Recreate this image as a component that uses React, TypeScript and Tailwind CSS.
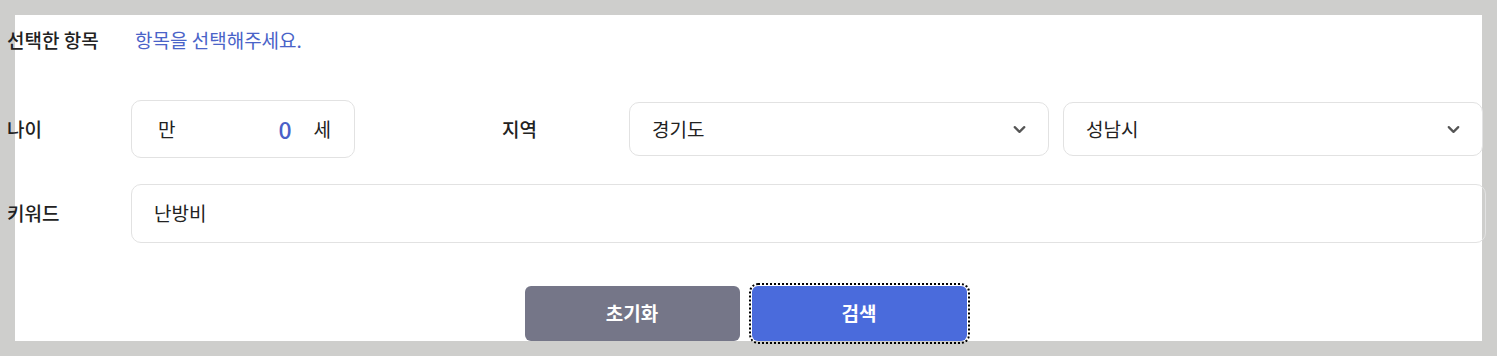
import { ChevronDown } from "lucide-react";

const font = { fontFamily: '"Noto Sans CJK KR", "Noto Sans", sans-serif' };

function Select({ value }: { value: string }) {
  return (
    <div className="flex h-[54px] w-[420px] shrink-0 items-center justify-between rounded-[10px] border border-[#e2e2e2] bg-white pl-[22px] pr-[19px]">
      <span className="text-[19px] text-[#222]">{value}</span>
      <ChevronDown size={19} strokeWidth={2.8} className="text-[#555]" />
    </div>
  );
}

export default function App() {
  return (
    <div className="min-h-screen bg-[#cececc] p-[15px] pr-0 pb-0" style={font}>
      <div className="h-[326px] w-[1467px] bg-white">
        <div className="ml-[-8px] flex w-[1480px] flex-col">
          {/* 선택한 항목 */}
          <div className="mt-[12px] flex h-[25px] items-center leading-[25px]">
            <span className="w-[128px] text-[19px] font-medium text-[#222]">선택한 항목</span>
            <span className="text-[19px] text-[#4a63c8]">항목을 선택해주세요.</span>
          </div>

          {/* 나이 / 지역 */}
          <div className="mt-[48px] flex h-[58px] items-center">
            <span className="w-[124px] shrink-0 text-[19px] font-medium text-[#222]">나이</span>
            <div className="flex h-[58px] w-[224px] shrink-0 items-center rounded-[10px] border border-[#e2e2e2] pl-[26px] pr-[23px]">
              <span className="text-[19px] text-[#222]">만</span>
              <span className="ml-auto mr-[22px] text-[23px] font-medium text-[#4a5fc8]">0</span>
              <span className="text-[19px] text-[#222]">세</span>
            </div>
            <span className="ml-[147px] w-[127px] shrink-0 text-[19px] font-medium text-[#222]">지역</span>
            <div className="flex gap-[14px]">
              <Select value="경기도" />
              <Select value="성남시" />
            </div>
          </div>

          {/* 키워드 */}
          <div className="mt-[26px] flex h-[59px] items-center">
            <span className="w-[124px] shrink-0 text-[19px] font-medium text-[#222]">키워드</span>
            <div className="flex h-[59px] w-[1355px] shrink-0 items-center rounded-[10px] border border-[#e2e2e2] pl-[22px]">
              <span className="text-[19px] text-[#222]">난방비</span>
            </div>
          </div>

          {/* 버튼 */}
          <div className="mt-[43px] flex w-[1475px] justify-center gap-[12px] pl-[2px]">
            <button className="h-[55px] w-[215px] rounded-[6px] bg-[#757688] text-[19px] font-bold text-white">
              초기화
            </button>
            <button className="h-[55px] w-[215px] rounded-[6px] bg-[#4a6bdc] text-[19px] font-bold text-white outline-2 outline-dotted outline-black outline-offset-1">
              검색
            </button>
          </div>
        </div>
      </div>
    </div>
  );
}
